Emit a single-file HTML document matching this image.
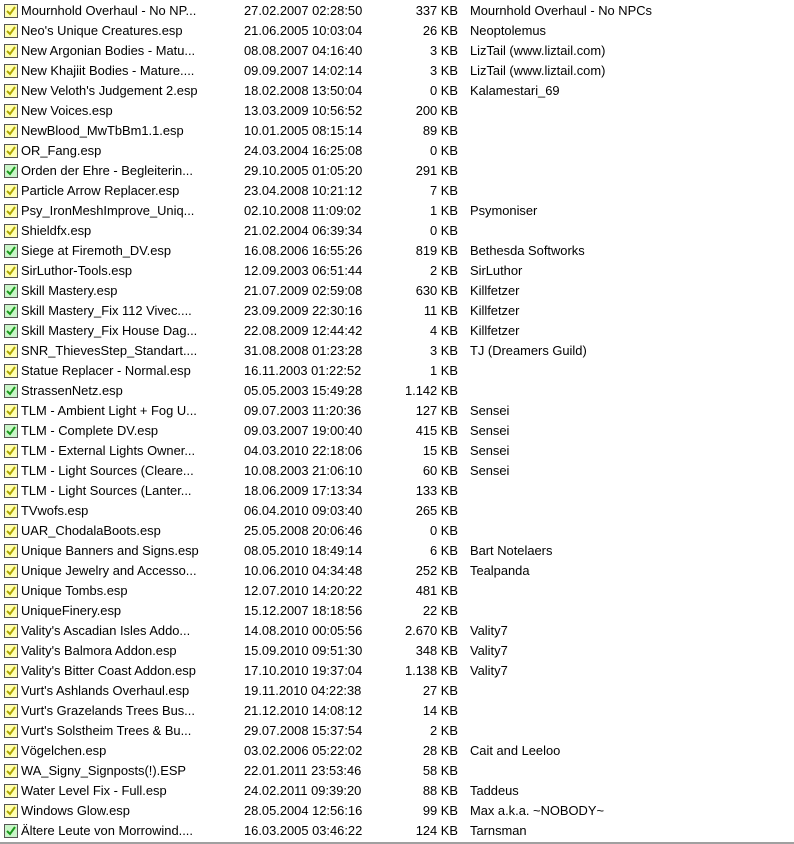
<!DOCTYPE html>
<html><head><meta charset="utf-8"><style>
body{margin:0;width:794px;height:844px;background:#fff;overflow:hidden;font-family:"Liberation Sans",sans-serif;font-size:12.9px;color:#000;position:relative}
.r{position:absolute;left:0;width:794px;height:20px;line-height:20px;white-space:nowrap}
.cb{position:absolute;left:4px;top:3px;width:12px;height:12px;border:1px solid #555;background:#ffffb0}
.cb svg{position:absolute;left:0;top:0}
.g .cb{background:#c8f5c8}
.n{position:absolute;left:21px;width:185px;overflow:hidden}
.d{position:absolute;left:244px}
.s{position:absolute;left:380px;width:78px;text-align:right}
.a{position:absolute;left:470px}
.bot{position:absolute;left:0;top:842px;width:794px;height:2px;background:#a0a0a0}
</style></head><body>
<div id="rows"></div>
<script>
const data=[
["Mournhold Overhaul - No NP...","27.02.2007 02:28:50","337 KB","Mournhold Overhaul - No NPCs",0],
["Neo's Unique Creatures.esp","21.06.2005 10:03:04","26 KB","Neoptolemus",0],
["New Argonian Bodies - Matu...","08.08.2007 04:16:40","3 KB","LizTail (www.liztail.com)",0],
["New Khajiit Bodies - Mature....","09.09.2007 14:02:14","3 KB","LizTail (www.liztail.com)",0],
["New Veloth's Judgement 2.esp","18.02.2008 13:50:04","0 KB","Kalamestari_69",0],
["New Voices.esp","13.03.2009 10:56:52","200 KB","",0],
["NewBlood_MwTbBm1.1.esp","10.01.2005 08:15:14","89 KB","",0],
["OR_Fang.esp","24.03.2004 16:25:08","0 KB","",0],
["Orden der Ehre - Begleiterin...","29.10.2005 01:05:20","291 KB","",1],
["Particle Arrow Replacer.esp","23.04.2008 10:21:12","7 KB","",0],
["Psy_IronMeshImprove_Uniq...","02.10.2008 11:09:02","1 KB","Psymoniser",0],
["Shieldfx.esp","21.02.2004 06:39:34","0 KB","",0],
["Siege at Firemoth_DV.esp","16.08.2006 16:55:26","819 KB","Bethesda Softworks",1],
["SirLuthor-Tools.esp","12.09.2003 06:51:44","2 KB","SirLuthor",0],
["Skill Mastery.esp","21.07.2009 02:59:08","630 KB","Killfetzer",1],
["Skill Mastery_Fix 112 Vivec....","23.09.2009 22:30:16","11 KB","Killfetzer",1],
["Skill Mastery_Fix House Dag...","22.08.2009 12:44:42","4 KB","Killfetzer",1],
["SNR_ThievesStep_Standart....","31.08.2008 01:23:28","3 KB","TJ (Dreamers Guild)",0],
["Statue Replacer - Normal.esp","16.11.2003 01:22:52","1 KB","",0],
["StrassenNetz.esp","05.05.2003 15:49:28","1.142 KB","",1],
["TLM - Ambient Light + Fog U...","09.07.2003 11:20:36","127 KB","Sensei",0],
["TLM - Complete DV.esp","09.03.2007 19:00:40","415 KB","Sensei",1],
["TLM - External Lights Owner...","04.03.2010 22:18:06","15 KB","Sensei",0],
["TLM - Light Sources (Cleare...","10.08.2003 21:06:10","60 KB","Sensei",0],
["TLM - Light Sources (Lanter...","18.06.2009 17:13:34","133 KB","",0],
["TVwofs.esp","06.04.2010 09:03:40","265 KB","",0],
["UAR_ChodalaBoots.esp","25.05.2008 20:06:46","0 KB","",0],
["Unique Banners and Signs.esp","08.05.2010 18:49:14","6 KB","Bart Notelaers",0],
["Unique Jewelry and Accesso...","10.06.2010 04:34:48","252 KB","Tealpanda",0],
["Unique Tombs.esp","12.07.2010 14:20:22","481 KB","",0],
["UniqueFinery.esp","15.12.2007 18:18:56","22 KB","",0],
["Vality's Ascadian Isles Addo...","14.08.2010 00:05:56","2.670 KB","Vality7",0],
["Vality's Balmora Addon.esp","15.09.2010 09:51:30","348 KB","Vality7",0],
["Vality's Bitter Coast Addon.esp","17.10.2010 19:37:04","1.138 KB","Vality7",0],
["Vurt's Ashlands Overhaul.esp","19.11.2010 04:22:38","27 KB","",0],
["Vurt's Grazelands Trees Bus...","21.12.2010 14:08:12","14 KB","",0],
["Vurt's Solstheim Trees & Bu...","29.07.2008 15:37:54","2 KB","",0],
["Vögelchen.esp","03.02.2006 05:22:02","28 KB","Cait and Leeloo",0],
["WA_Signy_Signposts(!).ESP","22.01.2011 23:53:46","58 KB","",0],
["Water Level Fix - Full.esp","24.02.2011 09:39:20","88 KB","Taddeus",0],
["Windows Glow.esp","28.05.2004 12:56:16","99 KB","Max a.k.a. ~NOBODY~",0],
["Ältere Leute von Morrowind....","16.03.2005 03:46:22","124 KB","Tarnsman",1]];
const esc=s=>s.replace(/&/g,"&amp;").replace(/</g,"&lt;");
let h="";
data.forEach((r,i)=>{
 const c=r[4]?"#1a9a1a":"#b0a800";
 h+=`<div class="r${r[4]?' g':''}" style="top:${1+i*20}px"><div class="cb"><svg width="12" height="12" viewBox="0 0 12 12"><path d="M2 6 L5 9 L10 2" fill="none" stroke="${c}" stroke-width="2"/></svg></div><span class="n">${esc(r[0])}</span><span class="d">${r[1]}</span><span class="s">${r[2]}</span><span class="a">${esc(r[3])}</span></div>`;
});
document.getElementById("rows").innerHTML=h;
</script>
<div class="bot"></div>
</body></html>
